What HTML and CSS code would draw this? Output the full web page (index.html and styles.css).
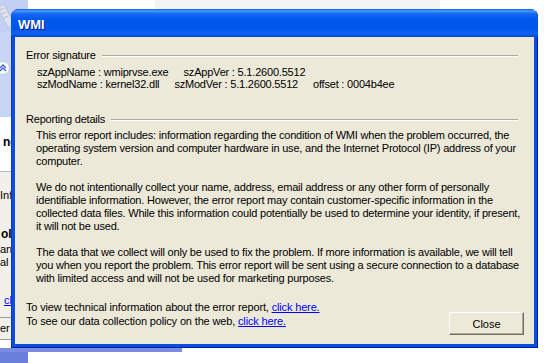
FILE: index.html
```html
<!DOCTYPE html>
<html lang="en">
<head>
    <meta charset="UTF-8">
    <title>WMI</title>
    <link rel="stylesheet" href="styles.css">
</head>
<body>

    <div class="desktop">

        <!-- window behind the dialog -->
        <div class="backwin">
            <div class="bw-head">
                <svg width="28" height="32" viewBox="0 0 28 32">
                    <path d="M-2 8 L4 4 L14 24 L8 28 Z" fill="#dde3ef" stroke="#b8c2d8" stroke-width="1"/>
                    <path d="M0 10 L4 8 M2 14 L6 12 M4 18 L8 16" stroke="#b0b8cc" stroke-width="1"/>
                </svg>
            </div>
            <div class="bw-pane">
                <svg class="chev" width="12" height="14" viewBox="0 0 12 14">
                    <circle cx="3" cy="7" r="6.5" fill="#fff" stroke="#b5c3ea"/>
                    <path d="M0 7 L3 4 L6 7 M0 10 L3 7 L6 10" fill="none" stroke="#3d5fcf" stroke-width="1.3"/>
                </svg>
            </div>
            <div class="bw-white"><b>ne</b></div>
            <div class="bw-info">
                <div class="bw-line info">Info</div>
                <div class="bw-line bold">ole</div>
                <div class="bw-line">an</div>
                <div class="bw-line">al</div>
                <a class="bw-link" href="#">cl</a>
            </div>
            <div class="bw-foot">er</div>
        </div>
        <div class="taskbit"></div>
        <div class="topstrip"></div>

        <!-- error report dialog -->
        <div class="dialog">
            <div class="titlebar">WMI</div>
            <div class="dialog-body">

                <div class="group-head">Error signature</div>
                <div class="sig">
                    <div>szAppName : wmiprvse.exe<span class="sep">szAppVer : 5.1.2600.5512</span></div>
                    <div>szModName : kernel32.dll<span class="sep">szModVer : 5.1.2600.5512</span><span class="sep">offset : 0004b4ee</span></div>
                </div>

                <div class="group-head details">Reporting details</div>
                <div class="text">
                    <p>This error report includes: information regarding the condition of WMI when the problem occurred, the<br>
                    operating system version and computer hardware in use, and the Internet Protocol (IP) address of your<br>
                    computer.</p>
                    <p>We do not intentionally collect your name, address, email address or any other form of personally<br>
                    identifiable information. However, the error report may contain customer-specific information in the<br>
                    collected data files. While this information could potentially be used to determine your identity, if present,<br>
                    it will not be used.</p>
                    <p>The data that we collect will only be used to fix the problem. If more information is available, we will tell<br>
                    you when you report the problem. This error report will be sent using a secure connection to a database<br>
                    with limited access and will not be used for marketing purposes.</p>
                </div>

                <div class="footer">
                    <div class="links">
                        <div>To view technical information about the error report, <a href="#">click here.</a></div>
                        <div>To see our data collection policy on the web, <a href="#">click here.</a></div>
                    </div>
                    <button type="button">Close</button>
                </div>

            </div>
        </div>

    </div>

</body>
</html>
```

FILE: styles.css
```css
/* Basic styles */
* {
    box-sizing: border-box;
}

body {
    margin: 0;
    font-family: "Liberation Sans", Arial, sans-serif;
    font-size: 11px;
    color: #000;
}

.desktop {
    position: relative;
    width: 548px;
    height: 363px;
    overflow: hidden;
    background-color: #fff;
}

/* Window behind */
.backwin {
    position: absolute;
    left: 0;
    top: 0;
    width: 182px;
    height: 352px;
    display: flex;
    flex-direction: column;
    border-bottom: 4px solid #7a8de0;
}

.bw-head {
    width: 28px;
    height: 32px;
    background-color: #c3d0f3;
}

.bw-head svg {
    display: block;
}

.bw-pane {
    height: 85px;
    background-color: #c9d5f5;
    padding-top: 29px;
}

.chev {
    display: block;
}

.bw-white {
    height: 55px;
    background-color: #fff;
    padding: 18px 0 0 3px;
    font-size: 12px;
    border-bottom: 1px solid #b9b9b9;
}

.bw-info {
    height: 146px;
    background-color: #f1f0ea;
    padding-top: 17px;
    border-bottom: 1px solid #9c9c9c;
}

.bw-line {
    line-height: 13px;
}

.bw-line.info {
    margin-bottom: 26px;
}

.bw-line.bold {
    font-weight: bold;
    font-size: 12px;
    margin: 0 0 2px 1px;
}

.bw-link {
    display: block;
    margin: 25px 0 0 4px;
    color: #0000ff;
    line-height: 13px;
}

.bw-foot {
    height: 22px;
    background-color: #f1f0ea;
    padding-top: 4px;
    border-bottom: 1px solid #9c9c9c;
}

.taskbit {
    position: absolute;
    left: 0;
    top: 352px;
    width: 28px;
    height: 11px;
    background-color: #6a7fd9;
}

.topstrip {
    position: absolute;
    left: 155px;
    top: 0;
    width: 285px;
    height: 9px;
    background-color: #f4f4f4;
}

/* Dialog */
.dialog {
    position: absolute;
    left: 11px;
    top: 9px;
    width: 527px;
    height: 339px;
    display: flex;
    flex-direction: column;
    background-color: #0a4fe0;
    border-radius: 8px 8px 0 0;
    box-shadow: inset -1px -1px 0 #001d9c, inset 1px 0 0 #0838d0;
}

.titlebar {
    height: 28px;
    padding: 2px 0 0 7px;
    display: flex;
    align-items: center;
    color: #fff;
    font-size: 13px;
    font-weight: bold;
    text-shadow: 1px 1px #0a1883;
    border-radius: 8px 8px 0 0;
    background: linear-gradient(to bottom, #0a5ef0 0%, #4a9dff 7%, #1a6af5 16%, #0058ee 35%, #0055e8 70%, #0a62f2 88%, #0046d6 100%);
}

.dialog-body {
    flex: 1;
    margin: 0 4px 4px;
    padding: 12px 16px 0 11px;
    background-color: #ece9d8;
    display: flex;
    flex-direction: column;
}

.group-head {
    display: flex;
    align-items: center;
    gap: 6px;
    line-height: 13px;
    letter-spacing: -0.2px;
}

.group-head::after {
    content: "";
    flex: 1;
    border-top: 1px solid #aca899;
    border-bottom: 1px solid #fff;
}

.group-head.details {
    margin-top: 23px;
}

.sig {
    margin-top: 4px;
    padding-left: 11px;
    line-height: 12px;
    letter-spacing: -0.2px;
    white-space: nowrap;
}

.sep {
    margin-left: 15px;
}

.text {
    margin-top: 3px;
    padding-left: 10px;
    line-height: 13px;
    letter-spacing: -0.2px;
    white-space: nowrap;
}

.text p {
    margin: 0 0 13px;
}

.footer {
    display: flex;
    justify-content: space-between;
    align-items: flex-start;
    margin: 2px -6px 0 0;
}

.links {
    line-height: 14px;
    letter-spacing: -0.15px;
}

.links a {
    color: #0000ff;
}

button {
    width: 75px;
    height: 23px;
    margin-top: 12px;
    padding: 0;
    font-family: "Liberation Sans", Arial, sans-serif;
    font-size: 11px;
    color: #000;
    background-color: #ece9d8;
    border: 1px solid;
    border-color: #fff #716f64 #716f64 #fff;
    box-shadow: inset -1px -1px 0 #aca899;
}
```
